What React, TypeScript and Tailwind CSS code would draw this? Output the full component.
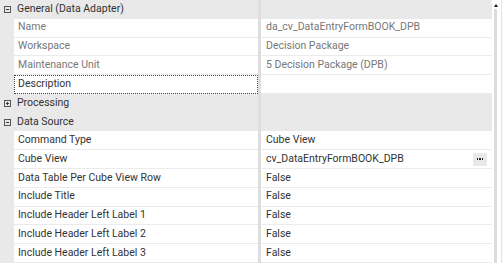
import React from "react";

type Row =
    | { kind: "group"; title: string; open: boolean }
    | { kind: "prop"; label: string; value: string; dim?: boolean; focus?: boolean; button?: boolean };

const rows: Row[] = [
    { kind: "group", title: "General (Data Adapter)", open: true },
    { kind: "prop", label: "Name", value: "da_cv_DataEntryFormBOOK_DPB", dim: true },
    { kind: "prop", label: "Workspace", value: "Decision Package", dim: true },
    { kind: "prop", label: "Maintenance Unit", value: "5 Decision Package (DPB)", dim: true },
    { kind: "prop", label: "Description", value: "", focus: true },
    { kind: "group", title: "Processing", open: false },
    { kind: "group", title: "Data Source", open: true },
    { kind: "prop", label: "Command Type", value: "Cube View" },
    { kind: "prop", label: "Cube View", value: "cv_DataEntryFormBOOK_DPB", button: true },
    { kind: "prop", label: "Data Table Per Cube View Row", value: "False" },
    { kind: "prop", label: "Include Title", value: "False" },
    { kind: "prop", label: "Include Header Left Label 1", value: "False" },
    { kind: "prop", label: "Include Header Left Label 2", value: "False" },
    { kind: "prop", label: "Include Header Left Label 3", value: "False" },
];

const Expander = ({ open }: { open: boolean }) => (
    <svg width="7" height="7" viewBox="0 0 7 7" className="block">
        <rect x="0.5" y="0.5" width="6" height="6" fill="none" stroke="#555" strokeWidth="1" />
        <line x1="2" y1="3.5" x2="5" y2="3.5" stroke="#333" strokeWidth="1" />
        {!open && <line x1="3.5" y1="2" x2="3.5" y2="5" stroke="#333" strokeWidth="1" />}
    </svg>
);

const GroupRow = ({ title, open }: { title: string; open: boolean }) => (
    <div className="flex h-[18.8px] bg-[#e9e9e9]">
        <div className="w-[14px] flex items-center justify-center pl-[1px]">
            <Expander open={open} />
        </div>
        <div className="w-[244px] flex items-center pl-[3px] text-[#333] whitespace-nowrap">
            {title}
        </div>
        <div className="w-[3px] bg-[#dedede]" />
        <div className="flex-1" />
    </div>
);

const PropRow = (props: { label: string; value: string; dim?: boolean; focus?: boolean; button?: boolean }) => (
    <div className="flex h-[18.8px]">
        <div className="w-[14px] bg-[#e9e9e9]" />
        <div
            className={
                props.focus
                    ? "w-[244px] flex items-center pl-[3px] bg-white border border-dotted border-[#444] whitespace-nowrap text-[#333]"
                    : props.dim
                      ? "w-[244px] flex items-center pl-[4px] bg-white border-b border-[#ebebeb] whitespace-nowrap text-[#777]"
                      : "w-[244px] flex items-center pl-[4px] bg-white border-b border-[#ebebeb] whitespace-nowrap text-[#333]"
            }
        >
            {props.label}
        </div>
        <div className="w-[3px] bg-[#dedede]" />
        <div
            className={
                props.dim
                    ? "flex-1 flex items-center pl-[5px] pr-[5px] bg-white border-b border-[#ebebeb] whitespace-nowrap text-[#777]"
                    : "flex-1 flex items-center pl-[5px] pr-[5px] bg-white border-b border-[#ebebeb] whitespace-nowrap text-[#333]"
            }
        >
            <span className="flex-1">{props.value}</span>
            {props.button && (
                <span className="w-[14px] h-[13px] bg-[#e8e8e8] flex items-center justify-center gap-[1px]">
                    <span className="w-[1.5px] h-[1.5px] bg-[#222]" />
                    <span className="w-[1.5px] h-[1.5px] bg-[#222]" />
                    <span className="w-[1.5px] h-[1.5px] bg-[#222]" />
                </span>
            )}
        </div>
    </div>
);

export default function App() {
    return (
        <div className="w-[502px] h-[263px] overflow-hidden flex bg-white font-['Roboto',sans-serif] text-[10.5px] leading-none">
            <div className="w-[492px] flex flex-col">
                {rows.map((r, i) =>
                    r.kind === "group" ? (
                        <GroupRow key={i} title={r.title} open={r.open} />
                    ) : (
                        <PropRow key={i} label={r.label} value={r.value} dim={r.dim} focus={r.focus} button={r.button} />
                    )
                )}
            </div>
            {/* scrollbar */}
            <div className="w-[10px] flex flex-col items-start pl-[2px] border-r border-[#e4e4e4]">
                <div className="w-0 h-0 mt-[4px] border-l-[2px] border-r-[2px] border-b-[3px] border-l-transparent border-r-transparent border-b-[#111]" />
                <div className="w-[3px] flex-1 mt-[2px] bg-[#dcdcdc]" />
            </div>
        </div>
    );
}
